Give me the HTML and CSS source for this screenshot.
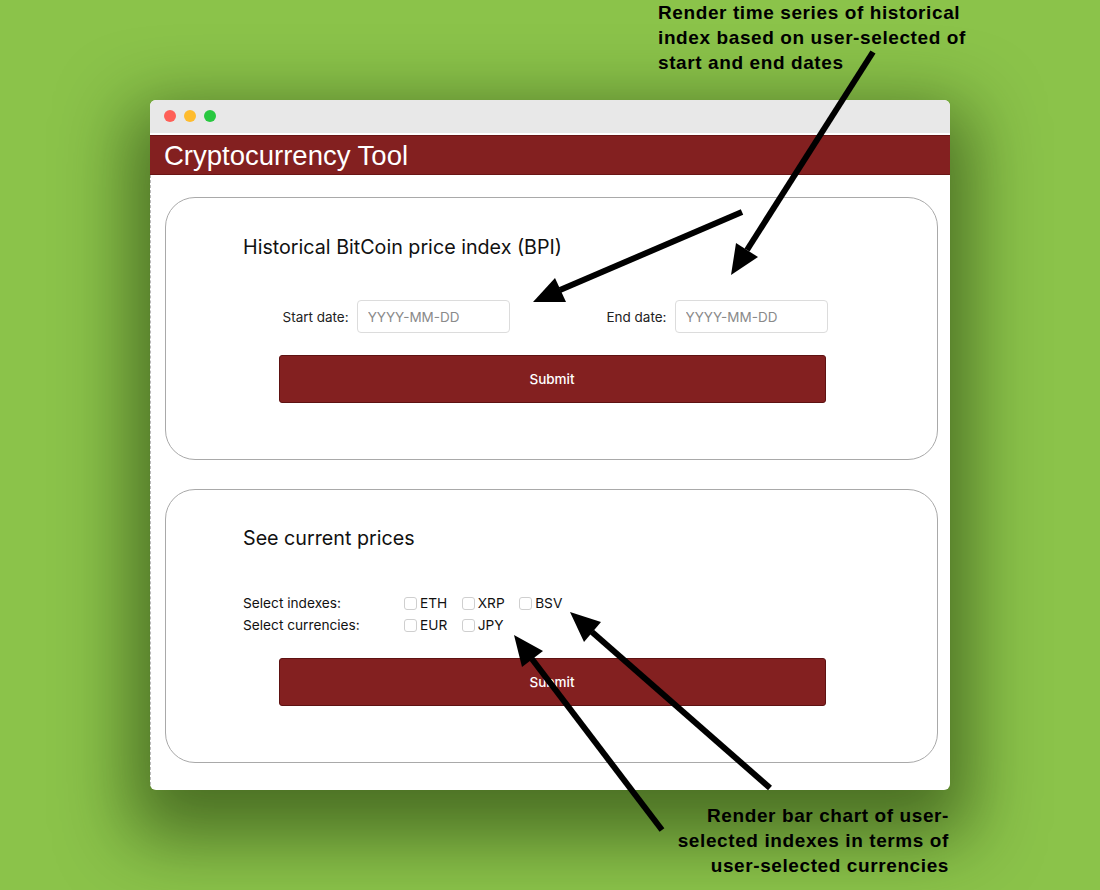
FILE: index.html
```html
<!DOCTYPE html>
<html lang="en">
<head>
<meta charset="utf-8">
<title>Cryptocurrency Tool</title>
<link rel="stylesheet" href="styles.css">
</head>
<body>
<div class="stage">
  <p class="note note-top">Render time series of historical<br>index based on user-selected of<br>start and end dates</p>

  <div class="window">
    <div class="titlebar">
      <span class="dot dot-red"></span>
      <span class="dot dot-yellow"></span>
      <span class="dot dot-green"></span>
    </div>
    <header class="appbar"><h1>Cryptocurrency Tool</h1></header>
    <main class="content">
      <section class="card card-bpi">
        <h2 class="card-title">Historical BitCoin price index (BPI)</h2>
        <div class="form">
          <div class="dates">
            <label class="field"><span class="field-label">Start date:</span><input class="date-input" type="text" placeholder="YYYY-MM-DD"></label>
            <label class="field"><span class="field-label">End date:</span><input class="date-input" type="text" placeholder="YYYY-MM-DD"></label>
          </div>
          <button class="submit" type="button">Submit</button>
        </div>
      </section>

      <section class="card card-prices">
        <h2 class="card-title">See current prices</h2>
        <div class="selects">
          <div class="select-row">
            <span class="select-label">Select indexes:</span>
            <span class="opt"><span class="box"></span>ETH</span>
            <span class="opt"><span class="box"></span>XRP</span>
            <span class="opt"><span class="box"></span>BSV</span>
          </div>
          <div class="select-row">
            <span class="select-label">Select currencies:</span>
            <span class="opt"><span class="box"></span>EUR</span>
            <span class="opt"><span class="box"></span>JPY</span>
          </div>
        </div>
        <div class="form">
          <button class="submit" type="button">Submit</button>
        </div>
      </section>
    </main>
  </div>

  <p class="note note-bottom">Render bar chart of user-<br>selected indexes in terms of<br>user-selected currencies</p>

  <svg class="arrows" width="1100" height="890" viewBox="0 0 1100 890" aria-hidden="true">
    <g stroke="#000" stroke-width="6" stroke-linecap="butt" fill="none">
      <line x1="873" y1="52" x2="747" y2="250"/>
      <line x1="742" y1="212" x2="560" y2="290"/>
      <line x1="770" y1="788" x2="592" y2="632"/>
      <line x1="662" y1="830" x2="532" y2="659"/>
    </g>
    <g fill="#000">
      <polygon points="731,275 758,257 736,243"/>
      <polygon points="533,302 566,302 555,278"/>
      <polygon points="570,612 601,622 584,642"/>
      <polygon points="514,635 543,651 522,667"/>
    </g>
  </svg>
</div>
</body>
</html>
```

FILE: styles.css
```css
* { box-sizing: border-box; }

html, body {
  margin: 0;
  padding: 0;
}

body {
  width: 1100px;
  height: 890px;
  overflow: hidden;
  background: #8bc34a;
  font-family: "Inter", "Liberation Sans", sans-serif;
}

.stage {
  position: relative;
  width: 1100px;
  height: 890px;
  padding: 100px 0 0 150px;
}

.note {
  position: absolute;
  margin: 0;
  font-family: "Liberation Sans", Arial, sans-serif;
  font-weight: bold;
  font-size: 19px;
  letter-spacing: 0.6px;
  line-height: 25px;
  color: #000;
  white-space: nowrap;
}

.note-top {
  left: 658px;
  top: 0;
  text-align: left;
}

.note-bottom {
  right: 151px;
  top: 803px;
  text-align: right;
}

.arrows {
  position: absolute;
  left: 0;
  top: 0;
  pointer-events: none;
}

.window {
  width: 800px;
  height: 690px;
  background: #fff;
  border-radius: 6px;
  overflow: hidden;
  box-shadow: 0 28px 70px 20px rgba(15, 35, 0, 0.52);
  display: flex;
  flex-direction: column;
}

.titlebar {
  height: 35px;
  background: #e8e8e8;
  border-bottom: 2px solid #fff;
  display: flex;
  align-items: center;
  gap: 8px;
  padding: 0 0 2px 14px;
}

.dot {
  width: 12px;
  height: 12px;
  border-radius: 50%;
}
.dot-red { background: #fe5f57; }
.dot-yellow { background: #febc2e; }
.dot-green { background: #28c840; }

.appbar {
  height: 40px;
  background: #832020;
  border-top: 1px solid #6a1515;
  border-bottom: 1px solid #6a1515;
  display: flex;
  align-items: center;
  padding-left: 14px;
}

.appbar h1 {
  margin: 0;
  font-family: "Liberation Sans", Arial, sans-serif;
  font-weight: normal;
  font-size: 27.5px;
  color: #fff;
  line-height: 1;
  padding-top: 1px;
}

.content {
  flex: 1;
  padding: 22px 12px 27px 14px;
  display: flex;
  flex-direction: column;
  gap: 29px;
  border-left: 1px dashed #b8b8b8;
}

.card {
  border: 1px solid #a9a9a9;
  border-radius: 30px;
  padding: 0 0 56px 0;
}

.card-title {
  margin: 0 0 0 77px;
  font-size: 19.7px;
  font-weight: normal;
  line-height: 24px;
  color: #111;
}

.card-bpi .card-title { padding-top: 37px; }
.card-prices .card-title { padding-top: 36px; }

.form {
  width: 546px;
  margin: 0 auto;
}

.dates {
  display: flex;
  justify-content: space-between;
  margin: 41px -3px 0 4px;
}

.field {
  display: flex;
  align-items: center;
  gap: 8px;
}

.field-label {
  font-size: 13.5px;
  color: #222;
}

.date-input {
  width: 153px;
  height: 33px;
  border: 1px solid #dcdcdc;
  border-radius: 4px;
  padding: 0 10px;
  font-family: "Inter", "Liberation Sans", sans-serif;
  font-size: 13.5px;
  color: #222;
  background: #fff;
}

.date-input::placeholder {
  color: #8a8a8a;
}

.submit {
  display: block;
  width: 547px;
  height: 48px;
  margin-top: 22px;
  background: #832020;
  border: 1px solid #5e1212;
  border-radius: 3px;
  color: #fff;
  font-family: "Inter", "Liberation Sans", sans-serif;
  font-size: 13.5px;
  font-weight: 500;
}

.selects {
  margin: 42px 0 0 77px;
}

.select-row {
  display: flex;
  align-items: center;
  height: 22px;
  font-size: 13.7px;
  color: #111;
}

.select-label {
  width: 161px;
}

.opt {
  display: flex;
  align-items: center;
  margin-right: 14.5px;
}

.box {
  width: 13px;
  height: 13px;
  border: 1px solid #cfcfcf;
  border-radius: 3px;
  margin-right: 3px;
  background: #fff;
}
```
